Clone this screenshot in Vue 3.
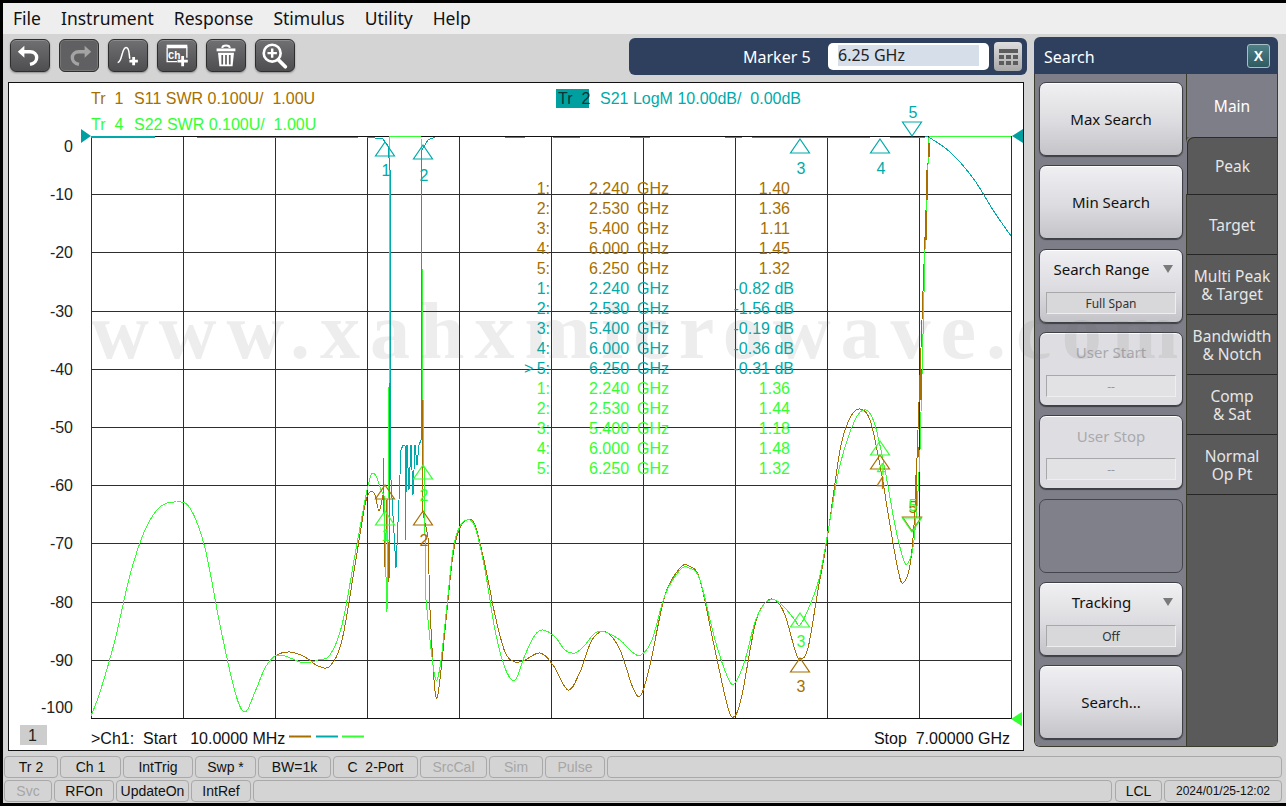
<script setup>
const menus = ['File', 'Instrument', 'Response', 'Stimulus', 'Utility', 'Help']

const gridX = Array.from({ length: 11 }, (_, i) => 91 + i * 92)
const gridY = Array.from({ length: 11 }, (_, i) => 136 + i * 58.2)
// top and bottom labels are pushed inside the graticule
const yLabels = gridY.map((y, i) => ({
  text: i === 0 ? '0' : String(-i * 10),
  y: (i === 0 ? 146 : i === 10 ? 707 : Math.round(y)) + 6
}))

const BROWN = '#a66f00'
const TEAL = '#00aaaa'
const GREEN = '#33ff33'

// catmull-rom through the sampled points, traces are too wiggly to keep by hand as beziers
function smooth(pts) {
  let d = `M${pts[0][0]} ${pts[0][1]}`
  for (let i = 0; i < pts.length - 1; i++) {
    const p0 = pts[i - 1] || pts[i]
    const p1 = pts[i]
    const p2 = pts[i + 1]
    const p3 = pts[i + 2] || p2
    const c1x = p1[0] + (p2[0] - p0[0]) / 6
    const c1y = p1[1] + (p2[1] - p0[1]) / 6
    const c2x = p2[0] - (p3[0] - p1[0]) / 6
    const c2y = p2[1] - (p3[1] - p1[1]) / 6
    d += ` C${c1x.toFixed(1)} ${c1y.toFixed(1)} ${c2x.toFixed(1)} ${c2y.toFixed(1)} ${p2[0]} ${p2[1]}`
  }
  return d
}
const line = (pts) => 'M' + pts.map((p) => p.join(' ')).join(' L')

const startCommon = [[91, 716], [100, 692], [115, 640], [130, 575], [145, 530], [160, 507], [176, 502], [190, 508], [205, 548], [220, 625], [235, 692], [245, 712], [255, 692], [265, 668], [275, 656]]

const brownPaths = [
  smooth([...startCommon, [290, 652], [305, 657], [318, 666], [330, 666], [342, 640], [355, 565], [365, 505], [370, 492], [375, 495], [379, 511], [383, 495]]),
  line([[383, 495], [383, 458], [385, 567], [387, 500], [389, 582], [390, 270]]),
  line([[422, 288], [422, 480], [423, 513], [428, 537], [430, 610]]),
  smooth([[430, 610], [434, 680], [437, 698], [441, 670], [447, 610], [453, 555], [459, 530], [467, 520], [475, 525], [485, 565], [495, 615], [505, 652], [515, 662], [525, 660], [540, 653], [553, 665], [568, 690], [580, 672], [592, 640], [606, 632], [620, 650], [633, 688], [641, 695], [650, 665], [665, 595], [680, 568], [689, 566], [700, 580], [715, 650], [728, 708], [735, 716], [742, 695], [755, 625], [765, 603], [775, 600], [785, 615], [795, 650], [800, 659], [808, 648], [818, 590], [827, 540], [840, 450], [850, 418], [860, 409], [870, 420], [880, 465], [890, 525], [898, 570], [903, 583], [910, 565], [915, 510], [918, 430], [922, 320], [926, 210], [929, 140]])
]

const greenPaths = [
  smooth([...startCommon, [285, 656], [295, 660], [305, 663], [318, 660], [330, 655], [342, 625], [355, 555], [365, 500], [370, 478], [373, 473], [377, 478], [381, 490], [384, 495]]),
  line([[384, 495], [385, 540], [387, 612], [389, 390], [390, 136], [421, 136], [423, 400], [426, 600], [430, 640]]),
  smooth([[430, 640], [434, 672], [437, 680], [441, 660], [447, 605], [453, 550], [459, 528], [467, 520], [475, 527], [485, 570], [495, 630], [505, 668], [515, 680], [525, 655], [535, 635], [543, 630], [555, 637], [565, 650], [575, 653], [585, 645], [595, 633], [605, 632], [620, 640], [632, 652], [641, 655], [652, 640], [665, 595], [680, 570], [689, 568], [700, 580], [715, 640], [728, 678], [735, 683], [745, 660], [755, 622], [765, 603], [775, 600], [785, 608], [795, 620], [800, 625], [810, 605], [820, 575], [830, 520], [840, 465], [855, 420], [866, 410], [875, 425], [885, 470], [895, 525], [903, 558], [908, 563], [914, 540], [920, 450], [925, 250], [929, 137]]),
  line([[929, 136], [1011, 136]])
]

const tealPaths = [
  line([[367, 137], [383, 139], [388, 146], [390, 170], [390, 400], [391, 480], [396, 568], [399, 500], [401, 450], [403, 445], [405, 446], [405, 540], [407, 445], [409, 490], [411, 445], [413, 495], [415, 445], [417, 465], [419, 445], [421, 440], [421, 170], [422, 150], [428, 140], [435, 137]]),
  smooth([[925, 137], [930, 138], [950, 152], [973, 178], [993, 210], [1011, 236]])
]

// short teal pieces that sit on the 0 dB line
const tealTop = [[91, 155], [197, 358], [505, 525], [553, 580], [630, 650], [725, 742], [752, 870], [890, 925]]

// brown showing through on the steep rise at the right
const brownDashes = [
  [[929, 143], [929, 157]], [[927, 170], [927, 200]], [[926, 211], [926, 240]],
  [[921, 370], [921, 400]], [[918, 447], [918, 457]], [[916, 475], [916, 510]]
]

function tri(x, y, down) {
  const h = 14
  const w = 9.5
  return down
    ? `${x - w},${y} ${x + w},${y} ${x},${y + h}`
    : `${x},${y} ${x + w},${y + h} ${x - w},${y + h}`
}

const markers = [
  { c: BROWN, x: 385, y: 485, label: '1', ly: 0 },
  { c: BROWN, x: 423, y: 511, label: '2', ly: 546 },
  { c: BROWN, x: 800, y: 658, label: '3', ly: 692 },
  { c: BROWN, x: 880, y: 455, label: '4', ly: 489 },
  { c: BROWN, x: 912, y: 517, label: '5', ly: 513, down: true },
  { c: GREEN, x: 385, y: 511, label: '1', ly: 541 },
  { c: GREEN, x: 423, y: 465, label: '2', ly: 501 },
  { c: GREEN, x: 800, y: 613, label: '3', ly: 647 },
  { c: GREEN, x: 880, y: 441, label: '4', ly: 475 },
  { c: GREEN, x: 912, y: 518, label: '5', ly: 511, down: true },
  { c: TEAL, x: 385, y: 142, label: '1', ly: 176 },
  { c: TEAL, x: 423, y: 145, label: '2', ly: 181 },
  { c: TEAL, x: 800, y: 139, label: '3', ly: 174 },
  { c: TEAL, x: 880, y: 139, label: '4', ly: 174 },
  { c: TEAL, x: 912, y: 122, label: '5', ly: 118, down: true }
]

const freqs = ['2.240', '2.530', '5.400', '6.000', '6.250']
const readouts = [
  { c: BROWN, vals: ['1.40', '1.36', '1.11', '1.45', '1.32'] },
  { c: TEAL, vals: ['-0.82 dB', '-1.56 dB', '-0.19 dB', '-0.36 dB', '-0.31 dB'] },
  { c: GREEN, vals: ['1.36', '1.44', '1.18', '1.48', '1.32'] }
]
const rows = readouts.flatMap((r, ri) =>
  r.vals.map((v, i) => ({
    c: r.c,
    n: `${i + 1}:`,
    freq: freqs[i],
    val: v,
    y: 194 + (ri * 5 + i) * 20,
    dB: ri === 1,
    active: ri === 1 && i === 4
  }))
)

const tabs = [
  ['Peak'], ['Target'], ['Multi Peak', '& Target'], ['Bandwidth', '& Notch'], ['Comp', '& Sat'], ['Normal', 'Op Pt']
]

const statusTop = [
  { t: 'Tr 2', w: 54 }, { t: 'Ch 1', w: 61 }, { t: 'IntTrig', w: 70 }, { t: 'Swp *', w: 61 }, { t: 'BW=1k', w: 73 },
  { t: 'C  2-Port', w: 85 }, { t: 'SrcCal', w: 67, off: true }, { t: 'Sim', w: 54, off: true }, { t: 'Pulse', w: 60, off: true }
]
const statusBottom = [
  { t: 'Svc', w: 48, off: true }, { t: 'RFOn', w: 60 }, { t: 'UpdateOn', w: 73 }, { t: 'IntRef', w: 60 }
]
</script>

<template>
  <div class="shell">
    <div class="menu">
      <span v-for="m in menus" :key="m">{{ m }}</span>
    </div>

    <div class="workspace">
      <div class="left">
        <div class="toolbar">
          <button class="tool">
            <svg viewBox="0 0 40 33"><path d="M14 6 7 12.500 14 19Z" fill="#fff" /><path d="M13 12.500H20C29 12.500 30 24 20 26" fill="none" stroke="#fff" stroke-width="3.600" /></svg>
          </button>
          <button class="tool off">
            <svg viewBox="0 0 40 33"><path d="M26 6 33 12.500 26 19Z" fill="#a3a3a3" /><path d="M27 12.500H20C11 12.500 10 24 20 26" fill="none" stroke="#a3a3a3" stroke-width="3.600" /></svg>
          </button>
          <button class="tool">
            <svg viewBox="0 0 40 33"><path d="M9 24C14 24 13 8 18 8C22 8 21 17 22 20" fill="none" stroke="#fff" stroke-width="1.600" /><path d="M26 18V27M21.500 22.500H30.500" stroke="#fff" stroke-width="3" /></svg>
          </button>
          <button class="tool">
            <svg viewBox="0 0 40 33"><path d="M9.500 8H30.500V19M20 23H9.500V8" fill="none" stroke="#fff" stroke-width="1.400" /><path d="M9 6.500H31" stroke="#fff" stroke-width="3" /><text x="10.500" y="20" class="ch">Ch</text><path d="M26 17V28M20.500 22.500H31.500" stroke="#fff" stroke-width="3" /></svg>
          </button>
          <button class="tool">
            <svg viewBox="0 0 40 33"><path d="M10 10.500H30" stroke="#fff" stroke-width="3" /><path d="M16 8.500C16 5 24 5 24 8.500" fill="none" stroke="#fff" stroke-width="2" /><path d="M11.500 13.500H28.500L27 28H13Z" fill="#fff" /><path d="M16 16V26M20 16V26M24 16V26" stroke="#5c5c5e" stroke-width="1.800" /></svg>
          </button>
          <button class="tool">
            <svg viewBox="0 0 40 33"><circle cx="17" cy="14" r="9" fill="none" stroke="#fff" stroke-width="2.800" /><path d="M17 9V19M12 14H22" stroke="#fff" stroke-width="2.600" /><path d="M23.500 21 31 28.500" stroke="#fff" stroke-width="4" stroke-linecap="round" /></svg>
          </button>

          <div class="marker-bar">
            <span class="marker-name">Marker 5</span>
            <div class="marker-input"><span>6.25 GHz</span></div>
            <button class="calc">
              <i class="calc-top"></i>
              <i v-for="n in 6" :key="n" class="calc-dot"></i>
            </button>
          </div>
        </div>

        <div class="chart">
          <svg viewBox="8 82 1016 669" width="1016" height="669" class="plot">
            <rect x="8.500" y="82.500" width="1015" height="668" fill="#fff" stroke="#111" />

            <text x="91" y="104" :fill="BROWN">Tr&#160;&#160;1</text>
            <text x="134" y="104" :fill="BROWN">S11 SWR 0.100U/&#160;&#160;1.00U</text>
            <text x="91" y="130" :fill="GREEN">Tr&#160;&#160;4</text>
            <text x="134" y="130" :fill="GREEN">S22 SWR 0.100U/&#160;&#160;1.00U</text>
            <rect x="556" y="89" width="33" height="19" fill="#00a0a0" />
            <text x="558" y="104" fill="#063636">Tr&#160;&#160;2</text>
            <text x="600" y="104" :fill="TEAL">S21 LogM 10.00dB/&#160;&#160;0.00dB</text>

            <text v-for="l in yLabels" :key="l.text" x="73" :y="l.y" text-anchor="end" fill="#222">{{ l.text }}</text>

            <g shape-rendering="crispEdges">
              <line v-for="x in gridX" :key="x" :x1="x + 0.5" :x2="x + 0.5" y1="136" y2="719" stroke="#2e2e2e" />
              <line v-for="y in gridY" :key="y" x1="91" x2="1012" :y1="Math.round(y) + 0.5" :y2="Math.round(y) + 0.5" stroke="#2e2e2e" />
              <path d="M91 136.500H1012M91 718.500H1012" stroke="#111" fill="none" />
            </g>

            <g class="readout">
              <g v-for="r in rows" :key="r.y" :fill="r.c">
                <text v-if="r.active" x="524" :y="r.y">&gt;</text>
                <text x="550" :y="r.y" text-anchor="end">{{ r.n }}</text>
                <text x="589" :y="r.y">{{ r.freq }}</text>
                <text x="637" :y="r.y">GHz</text>
                <text :x="r.dB ? 794 : 790" :y="r.y" text-anchor="end">{{ r.val }}</text>
              </g>
            </g>

            <g fill="none" shape-rendering="crispEdges">
              <path v-for="(d, i) in brownPaths" :key="'b' + i" :d="d" :stroke="BROWN" />
              <path v-for="(d, i) in greenPaths" :key="'g' + i" :d="d" :stroke="GREEN" />
              <path v-for="(d, i) in tealPaths" :key="'t' + i" :d="d" :stroke="TEAL" />
              <line v-for="s in tealTop" :key="s[0]" :x1="s[0]" :x2="s[1]" y1="137.500" y2="137.500" :stroke="TEAL" />
              <line x1="91" x2="155" y1="136.500" y2="136.500" :stroke="TEAL" />
              <path v-for="(s, i) in brownDashes" :key="'d' + i" :d="line(s)" :stroke="BROWN" stroke-width="1.500" />
            </g>

            <g v-for="(m, i) in markers" :key="i">
              <polygon :points="tri(m.x, m.y, m.down)" fill="none" :stroke="m.c" stroke-width="1.200" />
              <text v-if="m.ly" :x="m.x + 1" :y="m.ly" text-anchor="middle" :fill="m.c">{{ m.label }}</text>
            </g>

            <polygon points="81,129 91,136 81,143" fill="#00a0a0" />
            <polygon points="1023,129 1012,136 1023,143" fill="#00a0a0" />
            <polygon points="1022,712 1011,719 1022,726" fill="#33ff33" />

            <rect x="20" y="725" width="27" height="20" fill="#cdcdcd" />
            <text x="28" y="741" fill="#222">1</text>
            <text x="91" y="744" fill="#111">&gt;Ch1:&#160;&#160;Start&#160;&#160;&#160;10.0000 MHz</text>
            <path d="M289 736.500H311" :stroke="BROWN" stroke-width="2" />
            <path d="M316 736.500H338" :stroke="TEAL" stroke-width="2" />
            <path d="M342 736.500H364" :stroke="GREEN" stroke-width="2" />
            <text x="1010" y="744" text-anchor="end" fill="#111">Stop&#160;&#160;7.00000 GHz</text>
          </svg>
        </div>
      </div>

      <div class="panel">
        <div class="panel-head">
          <span>Search</span>
          <button class="close">X</button>
        </div>
        <div class="panel-body">
          <div class="softkeys">
            <button class="key">Max Search</button>
            <button class="key">Min Search</button>
            <button class="key stacked">
              <span class="key-head"><span class="key-label">Search Range</span><i class="arrow"></i></span>
              <span class="field">Full Span</span>
            </button>
            <button class="key stacked off">
              <span class="key-head plain"><span class="key-label">User Start</span></span>
              <span class="field">--</span>
            </button>
            <button class="key stacked off">
              <span class="key-head plain"><span class="key-label">User Stop</span></span>
              <span class="field">--</span>
            </button>
            <div class="key blank"></div>
            <button class="key stacked">
              <span class="key-head"><span class="key-label">Tracking</span><i class="arrow"></i></span>
              <span class="field">Off</span>
            </button>
            <button class="key">Search...</button>
          </div>
          <div class="tabs">
            <div class="tab active">Main</div>
            <div v-for="(t, i) in tabs" :key="t[0]" class="tab" :class="{ first: i === 0 }">
              <span v-for="l in t" :key="l">{{ l }}</span>
            </div>
            <div class="tab-rest"></div>
          </div>
        </div>
      </div>
    </div>

    <div class="status">
      <div class="status-row">
        <div v-for="s in statusTop" :key="s.t" class="cell" :class="{ off: s.off }" :style="{ width: s.w + 'px' }">{{ s.t }}</div>
        <div class="cell grow"></div>
      </div>
      <div class="status-row">
        <div v-for="s in statusBottom" :key="s.t" class="cell" :class="{ off: s.off }" :style="{ width: s.w + 'px' }">{{ s.t }}</div>
        <div class="cell grow"></div>
        <div class="cell lcl">LCL</div>
        <div class="cell date">2024/01/25-12:02</div>
      </div>
    </div>

    <div class="watermark">www.xahxmicrowave.com</div>
  </div>
</template>

<style scoped>
.shell { position: relative; width: 1286px; height: 806px; box-sizing: border-box; padding: 3px 0 3px 3px; background: #000; display: flex; flex-direction: column; overflow: hidden; font-family: "Liberation Sans", Arial, sans-serif; }
button { font: inherit; padding: 0; margin: 0; cursor: default; }

.menu { height: 31px; flex: none; box-sizing: border-box; padding: 0 0 2px 10px; background: #eeeeee; display: flex; align-items: center; gap: 20px; font-family: "Noto Sans", sans-serif; font-size: 17.500px; color: #111; }

.workspace { flex: none; height: 721px; display: flex; background: #d4d4d4; }
.left { width: 1031px; flex: none; }

.toolbar { height: 46px; display: flex; align-items: flex-start; padding: 5px 7px 0; box-sizing: border-box; gap: 9px; }
.tool { width: 40px; height: 33px; box-sizing: border-box; border: 1px solid #2e2e2e; border-radius: 6px; background: linear-gradient(#707072, #4e4e50); box-shadow: 0 1px 2px rgba(0,0,0,.35), inset 0 1px 0 #8c8c8e; display: flex; padding: 0; }
.tool svg { width: 38px; height: 31px; display: block; }
.tool.off { background: #606062; box-shadow: inset 0 0 0 1px #777; }
.ch { font: bold 11px "Liberation Mono", monospace; fill: #fff; }

.marker-bar { margin-left: auto; width: 398px; height: 37px; margin-top: -1px; box-sizing: border-box; background: #2f405f; border-radius: 6px; display: flex; align-items: center; color: #fff; font-family: "Noto Sans", sans-serif; font-size: 16px; padding-left: 114px; }
.marker-name { width: 85px; flex: none; }
.marker-input { width: 161px; height: 27px; box-sizing: border-box; flex: none; background: #fff; border-radius: 5px; padding: 2px 10px; color: #222; margin-right: 5px; }
.marker-input span { display: block; height: 21px; line-height: 21px; background: #d6deea; }
.calc { width: 28px; height: 29px; border: 0; border-radius: 4px; background: linear-gradient(#dedede, #a8a8a8); display: grid; grid-template-columns: repeat(3, 5px); gap: 2px; justify-content: center; align-content: center; }
.calc-top { grid-column: 1 / 4; height: 4px; background: #5c5c5c; }
.calc-dot { height: 4px; background: #5c5c5c; }

.chart { margin: 2px 0 0 5px; width: 1016px; height: 669px; }
.plot { display: block; font-family: "Liberation Sans", Arial, sans-serif; font-size: 16px; }

.panel { width: 244px; flex: none; height: 710px; margin-top: 3px; display: flex; flex-direction: column; }
.panel-head { height: 37px; flex: none; box-sizing: border-box; background: #2f405f; border-radius: 6px 6px 0 0; color: #fff; font-family: "Noto Sans", sans-serif; font-size: 16px; display: flex; align-items: center; justify-content: space-between; padding: 2px 8px 0 10px; }
.close { width: 23px; height: 24px; margin-top: -2px; border: 1px solid #a8c0c4; border-radius: 3px; background: linear-gradient(#4e8088, #2f5a62); color: #fff; font: bold 14px "Liberation Sans", Arial, sans-serif; }

.panel-body { flex: 1; display: flex; min-height: 0; border: 1px solid #3c3c2c; border-top: 0; border-radius: 0 0 6px 6px; overflow: hidden; }
.softkeys { width: 152px; flex: none; box-sizing: border-box; background: #7d7e87; border-right: 1px solid #3c3c2c; padding: 8px 0 0 4px; display: flex; flex-direction: column; gap: 9.330px; }
.key { width: 144px; height: 74px; flex: none; box-sizing: border-box; border: 1px solid #3e4048; border-radius: 7px; background: linear-gradient(#f0f0f3, #dcdce0 55%, #c4c4c8); box-shadow: inset 0 1px 0 #fff, 0 1px 1px rgba(0,0,0,.5); font-family: "Noto Sans", sans-serif; font-size: 15px; color: #111; display: block; }
.key.stacked { display: flex; flex-direction: column; align-items: center; padding-top: 6px; }
.key-head { display: flex; align-items: center; width: 100%; height: 27px; box-sizing: border-box; padding: 0 9px 0 0; }
.key-head.plain { padding: 0; }
.key-label { flex: 1; text-align: center; }
.arrow { width: 0; height: 0; border: 5px solid transparent; border-top: 8px solid #7a7a7a; border-bottom: 0; flex: none; }
.field { margin-top: 9px; width: 130px; height: 22px; line-height: 21px; box-sizing: border-box; text-align: center; border: 1px solid #a8a8aa; border-right-color: #eee; border-bottom-color: #eee; font-size: 12px; color: #333; background: #d8d8da; }
.key.off { background: #dedee2; color: #a9a9ad; }
.key.off .field { background: #e2e2e4; color: #999; }
.key.blank { background: #7f8089; box-shadow: none; border-color: #45464d; }

.tabs { flex: 1; display: flex; flex-direction: column; background: #5a5a5a; color: #e6e6e6; font-family: "Noto Sans", sans-serif; font-size: 15.500px; line-height: 18px; }
.tab { height: 60px; flex: none; box-sizing: border-box; display: flex; flex-direction: column; align-items: center; justify-content: center; border-bottom: 1px solid #262626; text-align: center; }
.tab.active { height: 63px; background: #7d7e87; color: #fff; border-bottom: 0; }
.tab.first { height: 58px; border-top: 1px solid #2e2e22; border-left: 1px solid #2e2e22; border-radius: 7px 0 0 0; background: #5a5a5a; box-shadow: -1px -1px 0 #7d7e87; }
.tab-rest { flex: 1; background: #5a5a5a; }

.status { flex: 1; background: #d4d4d4; padding-top: 1px; display: flex; flex-direction: column; gap: 2px; font-size: 14px; color: #111; }
.status-row { height: 22px; display: flex; gap: 2px; padding-left: 1px; padding-right: 4px; }
.cell { height: 22px; box-sizing: border-box; border: 1px solid #a9a9a9; border-radius: 4px; text-align: center; line-height: 20px; white-space: pre; flex: none; }
.cell.off { color: #a6a6a6; }
.cell.grow { flex: 1; }
.cell.lcl { width: 47px; margin-left: 1px; }
.cell.date { width: 118px; font-size: 12px; }

.watermark { position: absolute; left: 91px; top: 291px; font-family: "Liberation Serif", serif; font-weight: bold; font-size: 80px; line-height: 80px; letter-spacing: 10px; white-space: nowrap; color: rgba(110, 110, 110, 0.12); pointer-events: none; }
</style>
